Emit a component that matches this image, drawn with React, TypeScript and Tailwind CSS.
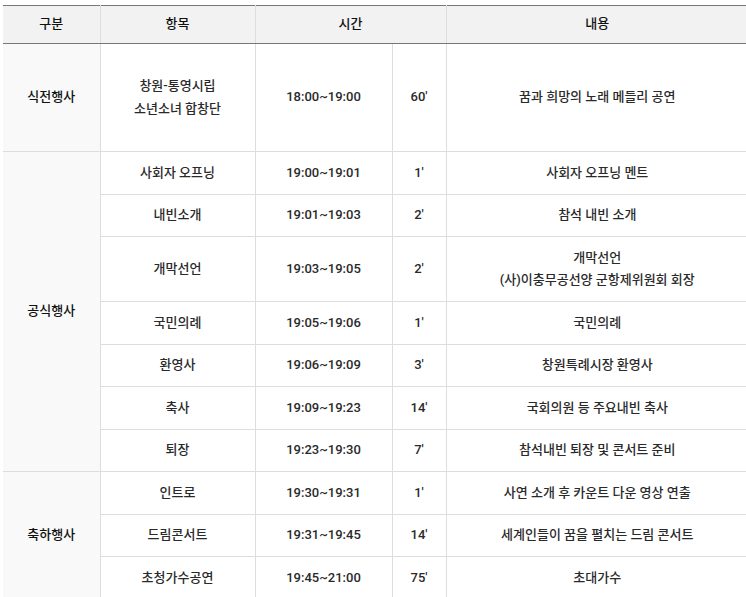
type Row = {
  group?: { name: string; span: number };
  item: string[];
  time: string;
  min: string;
  content: string[];
  tall?: boolean;
};

const rows: Row[] = [
  {
    group: { name: "식전행사", span: 1 },
    item: ["창원-통영시립", "소년소녀 합창단"],
    time: "18:00~19:00",
    min: "60'",
    content: ["꿈과 희망의 노래 메들리 공연"],
    tall: true,
  },
  { group: { name: "공식행사", span: 7 }, item: ["사회자 오프닝"], time: "19:00~19:01", min: "1'", content: ["사회자 오프닝 멘트"] },
  { item: ["내빈소개"], time: "19:01~19:03", min: "2'", content: ["참석 내빈 소개"] },
  { item: ["개막선언"], time: "19:03~19:05", min: "2'", content: ["개막선언", "(사)이충무공선양 군항제위원회 회장"] },
  { item: ["국민의례"], time: "19:05~19:06", min: "1'", content: ["국민의례"] },
  { item: ["환영사"], time: "19:06~19:09", min: "3'", content: ["창원특례시장 환영사"] },
  { item: ["축사"], time: "19:09~19:23", min: "14'", content: ["국회의원 등 주요내빈 축사"] },
  { item: ["퇴장"], time: "19:23~19:30", min: "7'", content: ["참석내빈 퇴장 및 콘서트 준비"] },
  { group: { name: "축하행사", span: 3 }, item: ["인트로"], time: "19:30~19:31", min: "1'", content: ["사연 소개 후 카운트 다운 영상 연출"] },
  { item: ["드림콘서트"], time: "19:31~19:45", min: "14'", content: ["세계인들이 꿈을 펼치는 드림 콘서트"] },
  { item: ["초청가수공연"], time: "19:45~21:00", min: "75'", content: ["초대가수"] },
];

const cell = "border border-[#dddddd] text-center align-middle py-[9.5px] px-2";

export default function App() {
  return (
    <div className="min-h-screen bg-white pt-[5px] pl-[3px] overflow-hidden font-['Roboto','Noto_Sans_CJK_KR',sans-serif] text-[13px] leading-[22.5px] text-[#2a2a2a] font-medium">
      <table className="w-[745px] table-fixed border-collapse">
        <colgroup>
          <col className="w-[97px]" />
          <col className="w-[155px]" />
          <col className="w-[137px]" />
          <col className="w-[54px]" />
          <col className="w-[302px]" />
        </colgroup>
        <thead>
          <tr className="h-[38px] bg-[#f2f2f2] text-[#111111]">
            <th className="border-y border-y-[#777777] border-x border-x-[#dddddd] border-l-0 font-medium">구분</th>
            <th className="border-y border-y-[#777777] border-x border-x-[#dddddd] font-medium">항목</th>
            <th colSpan={2} className="border-y border-y-[#777777] border-x border-x-[#dddddd] font-medium">
              시간
            </th>
            <th className="border-y border-y-[#777777] border-x border-x-[#dddddd] border-r-0 font-medium">내용</th>
          </tr>
        </thead>
        <tbody>
          {rows.map((r, i) => (
            <tr key={i} className={r.tall ? "h-[108px]" : ""}>
              {r.group && (
                <td rowSpan={r.group.span} className={`${cell} border-l-0 bg-[#f9f9f9] text-[#111111]`}>
                  {r.group.name}
                </td>
              )}
              <td className={cell}>
                {r.item.map((t) => (
                  <div key={t}>{t}</div>
                ))}
              </td>
              <td className={cell}>{r.time}</td>
              <td className={cell}>{r.min}</td>
              <td className={`${cell} border-r-0`}>
                {r.content.map((t) => (
                  <div key={t}>{t}</div>
                ))}
              </td>
            </tr>
          ))}
        </tbody>
      </table>
    </div>
  );
}
